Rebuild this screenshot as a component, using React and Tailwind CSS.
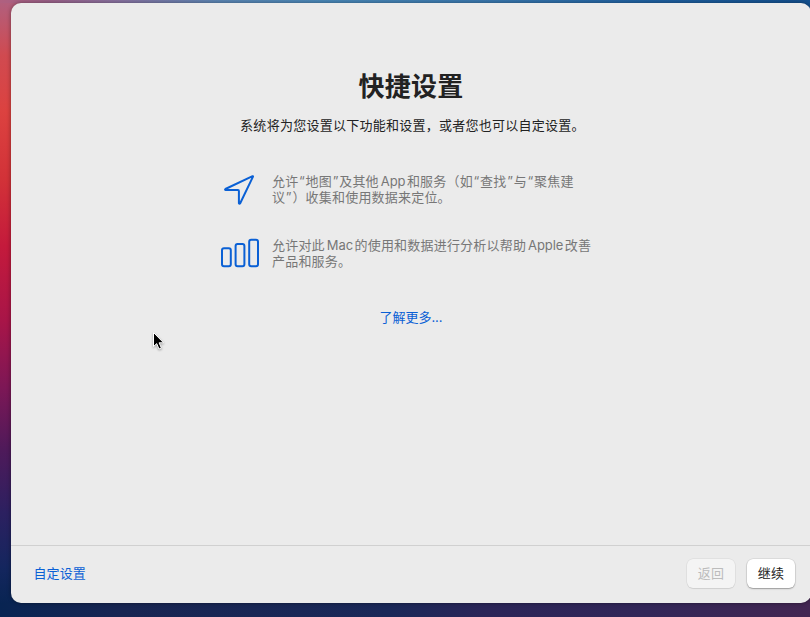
import clsx from "clsx";

// Latin words sit slightly apart from the surrounding Chinese text
const Latin = ({ children }) => (
  <span className="ml-[2px] mr-[1.5px] tracking-[-0.1px]">{children}</span>
);

const Quote = ({ children }) => (
  <span className="inline-block w-[7.2px] text-center">{children}</span>
);

const LocationIcon = () => (
  <svg width="40" height="34" viewBox="0 0 40 34" fill="none" className="shrink-0">
    <path
      d="M32.6 4.2 5.4 17Q4.6 18 5.5 18.1H18Q18.9 18.1 18.9 19V31.2Q19.5 32.3 20.2 31.2L33 4.6Q33.1 4 32.6 4.2Z"
      stroke="#0a60d5"
      strokeWidth="2"
      strokeLinejoin="round"
    />
  </svg>
);

const BarsIcon = () => (
  <svg width="40" height="34" viewBox="0 0 40 34" fill="none" className="shrink-0">
    <g stroke="#0a60d5" strokeWidth="2">
      <rect x="2" y="12.2" width="8.8" height="18" rx="2" />
      <rect x="15.6" y="8" width="8.8" height="22.2" rx="2" />
      <rect x="29.2" y="3.8" width="8.8" height="26.4" rx="2" />
    </g>
  </svg>
);

const Feature = ({ icon, children }) => (
  <div className="flex h-8 items-center gap-3">
    {icon}
    <p className="whitespace-nowrap text-[13px] leading-4 tracking-[0.2px] text-[#777777]">
      {children}
    </p>
  </div>
);

const Button = ({ disabled, children }) => (
  <button
    disabled={disabled}
    className={clsx(
      "h-[29px] w-12 rounded-[6px] text-[13px] leading-none tracking-[0.2px]",
      disabled
        ? "bg-[#f4f4f4] text-[#bcbcbc] shadow-[0_0_0_0.5px_rgba(0,0,0,0.08),0_1px_1px_rgba(0,0,0,0.08)]"
        : "bg-white text-[#222222] shadow-[0_0_0_0.5px_rgba(0,0,0,0.12),0_1px_1.5px_rgba(0,0,0,0.3)]"
    )}
  >
    {children}
  </button>
);

const Cursor = () => (
  <svg
    width="14"
    height="20"
    viewBox="0 0 14 20"
    className="absolute left-[152px] top-[331px] drop-shadow-[0_1px_1px_rgba(0,0,0,0.35)]"
  >
    <path
      d="M1.5 1.5V15.6L4.7 12.6 7 18 9.4 17 7.1 11.8H11.6Z"
      fill="#000"
      stroke="#fff"
      strokeWidth="1"
    />
  </svg>
);

export default function App() {
  return (
    <div className="relative h-[617px] w-[810px] overflow-hidden bg-[linear-gradient(to_bottom,#b0607f_0%,#d04a50_9%,#dc4240_18%,#d23238_29%,#c41a3c_40%,#a81548_52%,#7c1756_63%,#4e1a5a_73%,#2c2060_83%,#14265e_92%,#082452_98%)] font-[Inter,'Noto_Sans_CJK_SC',sans-serif] [text-spacing-trim:space-all]">
      <div className="flex h-full flex-col bg-[linear-gradient(to_right,#b0607f,#9a6088_6%,#8a719f_14%,#5c86b4_27%,#4a88b8_40%,#3a78ae_60%,#1f60a0_80%,#14508e),linear-gradient(to_right,#082452,#182552_15%,#1a2858_48%,#2b2558_60%,#322658_80%,#432652),linear-gradient(to_bottom,#14508e_10%,#432652_90%)] bg-[length:100%_3px,100%_14px,14px_100%] bg-[position:top,bottom,right] bg-no-repeat pl-[11px] pt-[3px]">
        <main className="flex h-[600px] w-[800px] shrink-0 flex-col overflow-hidden rounded-[10px] bg-[#ebebeb] shadow-[0_0_4px_rgba(0,0,0,0.4)]">
          <section className="flex flex-1 flex-col items-center pt-[66px]">
            <h1 className="text-[26px] font-bold leading-9 tracking-[0.2px] text-[#222222]">
              快捷设置
            </h1>
            <p className="mt-[11px] whitespace-nowrap pl-[3px] text-[13px] leading-[18px] tracking-[0.26px] text-[#222222]">
              系统将为您设置以下功能和设置，或者您也可以自定设置。
            </p>
            <div className="mt-[39px] flex w-[382px] flex-col gap-8">
              <Feature icon={<LocationIcon />}>
                允许<Quote>“</Quote>地图<Quote>”</Quote>及其他<Latin>App</Latin>
                和服务（如<Quote>“</Quote>查找<Quote>”</Quote>与<Quote>“</Quote>聚焦建
                <br />
                议<Quote>”</Quote>）收集和使用数据来定位。
              </Feature>
              <Feature icon={<BarsIcon />}>
                允许对此<Latin>Mac</Latin>的使用和数据进行分析以帮助<Latin>Apple</Latin>改善
                <br />
                产品和服务。
              </Feature>
            </div>
            <a className="mt-[39px] text-[13px] leading-[18px] text-[#0a60d5]">了解更多...</a>
          </section>
          <footer className="flex h-[58px] items-center gap-3 border-t border-[#d0d0d0] pb-[2px] pl-[22.5px] pr-4">
            <a className="mr-auto text-[13px] tracking-[0.1px] text-[#0a60d5]">自定设置</a>
            <Button disabled>返回</Button>
            <Button>继续</Button>
          </footer>
        </main>
      </div>
      <Cursor />
    </div>
  );
}
